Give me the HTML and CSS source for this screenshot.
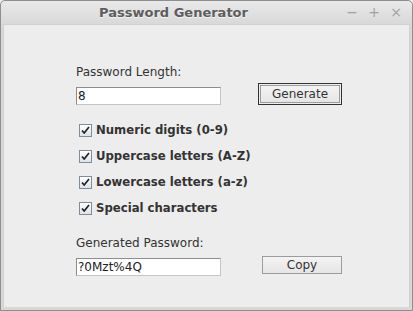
FILE: index.html
```html
<!DOCTYPE html>
<html lang="en">

<head>
  <meta charset="UTF-8">
  <meta name="viewport" content="width=device-width, initial-scale=1.0">
  <title>Password Generator</title>
  <link rel="stylesheet" href="styles.css">
</head>

<body>
  <div class="window">
    <header class="titlebar">
      <h1>Password Generator</h1>
      <div class="controls">
        <span class="ctl">&minus;</span>
        <span class="ctl">+</span>
        <span class="ctl">&times;</span>
      </div>
    </header>
    <main class="content">
      <label class="field-label" for="length">Password Length:</label>
      <div class="row row-top">
        <input type="text" id="length" value="8">
        <div class="focus-ring">
          <button type="button">Generate</button>
        </div>
      </div>

      <ul class="options">
        <li><span class="box"><svg width="9" height="8" viewBox="0 0 9 8"><path d="M1 4.5 L3.2 7 L8 1" fill="none" stroke="#222" stroke-width="1.7"/></svg></span>Numeric digits (0-9)</li>
        <li><span class="box"><svg width="9" height="8" viewBox="0 0 9 8"><path d="M1 4.5 L3.2 7 L8 1" fill="none" stroke="#222" stroke-width="1.7"/></svg></span>Uppercase letters (A-Z)</li>
        <li><span class="box"><svg width="9" height="8" viewBox="0 0 9 8"><path d="M1 4.5 L3.2 7 L8 1" fill="none" stroke="#222" stroke-width="1.7"/></svg></span>Lowercase letters (a-z)</li>
        <li><span class="box"><svg width="9" height="8" viewBox="0 0 9 8"><path d="M1 4.5 L3.2 7 L8 1" fill="none" stroke="#222" stroke-width="1.7"/></svg></span>Special characters</li>
      </ul>

      <label class="field-label" for="result">Generated Password:</label>
      <div class="row row-bottom">
        <input type="text" id="result" value="?0Mzt%4Q">
        <button type="button" class="plain">Copy</button>
      </div>
    </main>
  </div>
</body>

</html>
```

FILE: styles.css
```css
body {
  margin: 0;
  padding: 0;
  font-family: 'DejaVu Sans', sans-serif;
  background-color: #ededed;
}

.window {
  width: 413px;
  height: 311px;
  box-sizing: border-box;
  border: 1px solid #8e8e8e;
  border-radius: 5px 5px 0 0;
  background: linear-gradient(#e9e9e9, #d8d8d8 24px, #d8d8d8);
  padding: 0 2px 3px;
  display: flex;
  flex-direction: column;
}

.titlebar {
  height: 23px;
  position: relative;
  display: flex;
  align-items: center;
  justify-content: center;
}

.titlebar h1 {
  margin: 0 0 0 -66px;
  font-size: 13px;
  font-weight: bold;
  color: #5d5d5d;
  text-shadow: 0 1px 0 #f4f4f4;
}

.controls {
  position: absolute;
  right: 8px;
  top: 3px;
  display: flex;
  gap: 10px;
}

.ctl {
  width: 12px;
  text-align: center;
  font-size: 14px;
  color: #a2a2a2;
  line-height: 17px;
}

.content {
  flex: 1;
  background: #ededed;
  border: 1px solid #d0d0d0;
  border-bottom: none;
  padding: 39px 0 0 72px;
  color: #333333;
  font-size: 12px;
}

.field-label {
  display: block;
  line-height: 16px;
}

.row {
  display: flex;
  align-items: flex-end;
}

.row-top {
  height: 22px;
  margin-top: 3px;
}

.row-bottom {
  height: 20px;
  margin-top: 5px;
}

input {
  width: 145px;
  height: 18px;
  box-sizing: border-box;
  padding: 0 0 0 1px;
  font-family: 'DejaVu Sans', sans-serif;
  font-size: 12px;
  color: #222222;
  background: #ffffff;
  border: 1px solid #c4c4c4;
  border-top-color: #8d8d8d;
  border-left-color: #8d8d8d;
  border-radius: 0;
  outline: none;
}

.focus-ring {
  margin-left: 37px;
  border: 1px solid #333333;
  padding: 1px;
  display: flex;
}

button {
  width: 80px;
  height: 18px;
  box-sizing: border-box;
  padding: 0;
  font-family: 'DejaVu Sans', sans-serif;
  font-size: 12px;
  color: #333333;
  background: linear-gradient(#f3f3f3, #e6e6e6);
  border: 1px solid #9c9c9c;
  border-radius: 0;
  cursor: pointer;
}

.plain {
  margin-left: 41px;
  margin-bottom: 2px;
}

.options {
  list-style: none;
  margin: 12px 0 14px;
  padding: 0 0 0 3px;
}

.options li {
  height: 26px;
  display: flex;
  align-items: center;
  font-weight: bold;
  font-size: 11.7px;
  color: #333333;
}

.box {
  width: 11px;
  height: 11px;
  margin-right: 4px;
  border: 1px solid #7d8da0;
  background: linear-gradient(#ffffff, #dde3ea);
  display: flex;
  align-items: center;
  justify-content: center;
}
```
